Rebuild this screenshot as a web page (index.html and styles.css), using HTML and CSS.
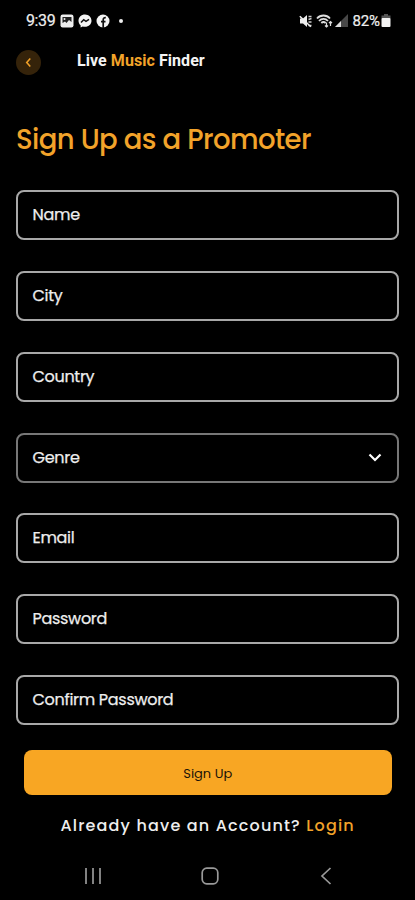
FILE: index.html
```html
<!DOCTYPE html>
<html lang="en">
<head>
<meta charset="utf-8">
<meta name="viewport" content="width=device-width, initial-scale=1">
<title>Live Music Finder</title>
<link rel="stylesheet" href="styles.css">
</head>
<body>
<div class="screen">
  <div class="status">
    <div class="status-left">
      <span class="clock">9:39</span>
      <svg class="s-icon" viewBox="0 0 14 14"><rect x=".5" y=".5" width="13" height="13" rx="2.2" fill="#eee"/><path d="M2.500 3h9v5L9 6 6.500 9 5 7.500 2.500 9z" fill="#222"/><circle cx="4.500" cy="5" r="1" fill="#eee"/></svg>
      <svg class="s-icon" viewBox="0 0 14 14"><path d="M7 .5C3.200.5.5 3.200.5 6.700c0 1.900.8 3.500 2.100 4.600v2.200l2.100-1.100c.7.200 1.500.3 2.300.3 3.800 0 6.500-2.600 6.500-6S10.800.5 7 .5z" fill="#f4f4f4"/><path d="M3 8.500l2.700-2.800L8 7.400l3-2" fill="none" stroke="#111" stroke-width="1.500"/></svg>
      <svg class="s-icon" viewBox="0 0 14 14"><circle cx="7" cy="7" r="6.500" fill="#f4f4f4"/><path d="M7.200 14V5.800c0-1.500.8-2.200 2.600-2.100M5 7.700h4.500" fill="none" stroke="#111" stroke-width="1.700"/></svg>
      <span class="more-dot"></span>
    </div>
    <div class="status-right">
      <svg class="mute" viewBox="0 0 14 14"><path d="M1 4.500h3L8 1v12L4 9.500H1z" fill="#eee"/><path d="M9.500 2.500h3M9.500 5.500l3-1M9.500 8h3M9.500 11.500h3" stroke="#ccc" stroke-width="1.500"/><path d="M.8 2.200l11 10.500" stroke="#eee" stroke-width="1.500"/></svg>
      <svg class="wifi" viewBox="0 0 17 14"><g fill="none" stroke="#ddd"><path d="M1 4.500c3.500-4 9.500-4 13 0M3 7c2.600-2.800 6.400-2.800 9 0M5.300 9c1.400-1.300 3-1.300 4.400 0" stroke-width="1.800"/><path d="M10.500 13V8.500M9 11.500l1.500 1.500 1.500-1.500M14.500 12V7.500M13 9l1.500-1.500L16 9" stroke-width="1.200"/></g></svg>
      <svg class="signal" viewBox="0 0 13 13"><path d="M0 13L13 0v13z" fill="#484848"/><path d="M0 13l6-6v6z" fill="#ddd"/></svg>
      <span class="percent">82%</span>
      <svg class="battery" viewBox="0 0 10 13"><path d="M3 0h4v1.500h2.500v3h-9v-3H3z" fill="#555"/><rect x=".5" y="4" width="9" height="9" rx="1" fill="#f4f4f4"/></svg>
    </div>
  </div>
  <header class="appbar">
    <button class="back" aria-label="Back"><svg viewBox="0 0 24 24"><path d="M13.700 8.200L10.300 12l3.400 3.800" fill="none" stroke="#f0a028" stroke-width="1.500"/></svg></button>
    <div class="brand">Live <span class="accent">Music</span> Finder</div>
  </header>
  <h1>Sign Up as a Promoter</h1>
  <form class="form">
    <div class="field"><span>Name</span></div>
    <div class="field"><span>City</span></div>
    <div class="field"><span>Country</span></div>
    <div class="field select"><span>Genre</span><svg class="chevron" viewBox="0 0 14 9"><path d="M1.500 1.500L7 7l5.500-5.500" fill="none" stroke="#fff" stroke-width="2.200"/></svg></div>
    <div class="field"><span>Email</span></div>
    <div class="field"><span>Password</span></div>
    <div class="field"><span>Confirm Password</span></div>
    <button type="button" class="submit">Sign Up</button>
  </form>
  <p class="login">Already have an Account? <a class="accent">Login</a></p>
  <nav class="navbar">
    <svg viewBox="0 0 18 18"><path d="M2 1v16M9 1v16M16 1v16" stroke="#999" stroke-width="1.700"/></svg>
    <svg viewBox="0 0 18 18"><rect x="1.200" y="1.200" width="15.600" height="15.600" rx="4.500" fill="none" stroke="#999" stroke-width="1.700"/></svg>
    <svg viewBox="0 0 18 18"><path d="M13.500 1L5 9l8.500 8" fill="none" stroke="#999" stroke-width="1.700"/></svg>
  </nav>
</div>
</body>
</html>
```

FILE: styles.css
```css
* { box-sizing: border-box; }
body {
  margin: 0;
  background: #000;
  color: #eee;
  font-family: Poppins, Inter, sans-serif;
  font-feature-settings: "cv11" 1;
}
svg { display: block; flex: none; }
.screen { width: 415px; height: 900px; display: flex; flex-direction: column; overflow: hidden; }
.accent { color: #f2a32a; }
.status {
  height: 41px;
  padding: 0 24px 0 26px;
  display: flex;
  align-items: center;
  justify-content: space-between;
  font-family: Roboto, sans-serif;
}
.status-left, .status-right { display: flex; align-items: center; }
.clock { font-size: 16px; letter-spacing: -0.4px; margin-right: 5px; -webkit-text-stroke: 0.2px #eee; }
.s-icon { width: 14px; height: 14px; margin-right: 4px; }
.more-dot { width: 4px; height: 4px; border-radius: 50%; background: #eee; margin-left: 5px; }
.mute { width: 14px; height: 14px; margin-right: 3px; }
.wifi { width: 17px; height: 14px; margin-right: 2px; }
.signal { width: 13px; height: 13px; margin-right: 4px; }
.percent { font-size: 15px; letter-spacing: -0.1px; margin-right: 1px; -webkit-text-stroke: 0.2px #eee; }
.battery { width: 10px; height: 13px; }
.appbar { height: 42px; padding-left: 16px; display: flex; align-items: center; }
.back {
  width: 25px;
  height: 25px;
  padding: 0;
  border: 0;
  border-radius: 50%;
  background: #35230a;
}
.back svg { width: 25px; height: 25px; }
.brand {
  margin: -3px 0 0 36px;
  font: 700 16px/20px Roboto, sans-serif;
  letter-spacing: 0.06px;
  color: #f4f4f4;
}
h1 {
  margin: 36px 0 0 16px;
  height: 42px;
  line-height: 42px;
  font-size: 27.5px;
  font-weight: 500;
  letter-spacing: -0.57px;
  color: #f2a32a;
  white-space: nowrap;
}
.form { margin: 29.300px 16px 0; display: flex; flex-direction: column; gap: 30.800px; }
.field {
  height: 50px;
  flex: none;
  padding: 0 15px 0 14.500px;
  display: flex;
  align-items: center;
  border: 2px solid #a8a8a8;
  border-radius: 8px;
  font-size: 16px;
  line-height: 24px;
  letter-spacing: -0.3px;
  -webkit-text-stroke: 0.25px #eee;
  white-space: nowrap;
}
.select { justify-content: space-between; border-color: #777; }
.chevron { width: 14px; height: 9px; }
.submit {
  height: 45px;
  margin: -6px 7.500px 0 8px;
  padding: 3px 0 0;
  border: 0;
  border-radius: 8px;
  background: #f8a623;
  color: #1c1408;
  font: 400 13px/20px Poppins, Inter, sans-serif;
}
.login { margin: 18px 0 0 60.500px; font-size: 16px; line-height: 26px; font-weight: 500; letter-spacing: 1.170px; white-space: nowrap; }
.navbar { margin: 28px 80px 0 84px; display: flex; justify-content: space-between; }
.navbar svg { width: 18px; height: 18px; }
```
